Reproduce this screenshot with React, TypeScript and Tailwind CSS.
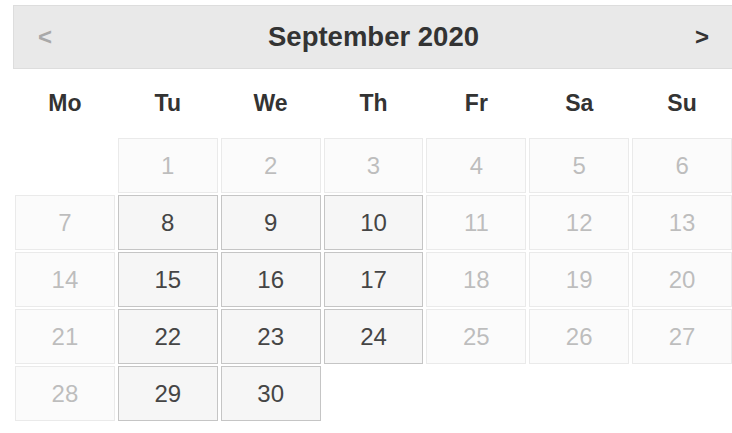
import React from "react";

const DAY_NAMES = ["Mo", "Tu", "We", "Th", "Fr", "Sa", "Su"];

// September 2020 starts on a Tuesday; only Tue/Wed/Thu from the 8th are selectable.
const OFFSET = 1;
const DAYS_IN_MONTH = 30;
const isSelectable = (day: number) => {
  const col = (day - 1 + OFFSET) % 7;
  return day >= 8 && col >= 1 && col <= 3;
};

export default function App() {
  const cells: (number | null)[] = [];
  for (let i = 0; i < OFFSET; i++) cells.push(null);
  for (let d = 1; d <= DAYS_IN_MONTH; d++) cells.push(d);

  return (
    <div
      className="w-[732px] h-[433px] overflow-hidden bg-white"
      style={{ fontFamily: '"Liberation Sans", Arial, sans-serif' }}
    >
      <div className="ml-[13px] mt-[5px] w-[721px]">
        <div className="grid grid-cols-[1fr_auto_1fr] items-center h-[64px] border border-[#dddddd] bg-[#e9e9e9] text-[#333333] font-bold">
          <span className="justify-self-start pl-[24px] text-[24px] text-[#333333] opacity-35">
            &lt;
          </span>
          <span className="text-[27.5px]">September 2020</span>
          <span className="justify-self-end pr-[24px] text-[24px]">&gt;</span>
        </div>

        <div className="ml-[2px] w-[717px]">
          <div className="grid grid-cols-7 gap-x-[3px] h-[68px] items-center">
            {DAY_NAMES.map((name) => (
              <span
                key={name}
                className="text-center text-[23px] font-bold text-[#333333]"
              >
                {name}
              </span>
            ))}
          </div>

          <div className="mt-[1px] grid grid-cols-7 gap-x-[3px] gap-y-[2px]">
            {cells.map((day, i) =>
              day === null ? (
                <div key={`e${i}`} className="h-[55px]" />
              ) : (
                <div
                  key={day}
                  className={`h-[55px] flex items-center justify-center border border-[#c5c5c5] bg-[#f6f6f6] text-[24px] text-[#454545] ${
                    isSelectable(day) ? "" : "opacity-35"
                  }`}
                >
                  {day}
                </div>
              )
            )}
          </div>
        </div>
      </div>
    </div>
  );
}
